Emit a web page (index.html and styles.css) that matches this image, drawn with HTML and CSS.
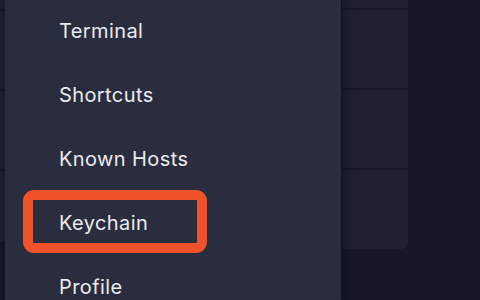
FILE: index.html
```html
<!DOCTYPE html>
<html lang="en">

<head>
 <meta charset="UTF-8">
 <meta name="viewport" content="width=device-width, initial-scale=1.0">
 <title>Settings menu</title>
 <link rel="stylesheet" href="styles.css">
</head>

<body>

 <div class="app">
  <aside class="cards cards-left">
   <div class="card card-top"></div>
   <div class="card"></div>
   <div class="card"></div>
   <div class="card card-last"></div>
  </aside>

  <nav class="menu">
   <ul class="menu-list">
    <li class="menu-item">Terminal</li>
    <li class="menu-item">Shortcuts</li>
    <li class="menu-item">Known Hosts</li>
    <li class="menu-item active">Keychain</li>
    <li class="menu-item">Profile</li>
   </ul>
  </nav>

  <section class="cards cards-right">
   <div class="card card-top"></div>
   <div class="card"></div>
   <div class="card"></div>
   <div class="card card-last"></div>
  </section>
 </div>

</body>

</html>
```

FILE: styles.css
```css
 :root {
  --bg-color: #161828;
  --card-color: #1f2132;
  --panel-color: #2a2d3e;
  --text-color: #ebebf0;
  --accent-color: #f05329;
  --main-font: "Inter", "Noto Sans", sans-serif;
 }

 html {
  box-sizing: border-box;
  font-family: var(--main-font);
 }

 *,
 *::before,
 *::after {
  box-sizing: inherit;
 }

 body {
  margin: 0;
  height: 300px;
  overflow: hidden;
  background-color: var(--bg-color);
 }

 .app {
  display: flex;
  height: 300px;
 }

 /*  - - - Tarjetas de fondo - - -  */
 .cards {
  display: flex;
  flex-direction: column;
  gap: 2px;
  flex-shrink: 0;
 }

 .cards-left {
  width: 5px;
 }

 .cards-right {
  width: 66px;
  margin-left: 1px;
 }

 .card {
  height: 78px;
  background-color: var(--card-color);
 }

 .card-top {
  height: 8px;
 }

 .cards-left .card-top {
  height: 9px;
 }

 .cards-left .card-last {
  height: 70px;
 }

 .cards-right .card-last {
  height: 79px;
  border-bottom-right-radius: 7px;
 }

 /*  - - - Menu - - -  */
 .menu {
  position: relative;
  z-index: 1;
  width: 336px;
  height: 300px;
  overflow: hidden;
  flex-shrink: 0;
  background-color: var(--panel-color);
  box-shadow: 3px 0 10px rgba(10, 11, 20, 0.55);
 }

 .menu-list {
  list-style: none;
  margin: -1px 0 0 0;
  padding: 0;
 }

 .menu-item {
  position: relative;
  height: 64px;
  padding: 20px 0 20px 54px;
  font-size: 20px;
  font-weight: 400;
  line-height: 24px;
  letter-spacing: 0.4px;
  color: var(--text-color);
 }

 .menu-item.active::after {
  content: "";
  position: absolute;
  left: 18px;
  top: -1px;
  width: 184px;
  height: 63px;
  border: 10px solid var(--accent-color);
  border-radius: 11px;
 }
```
